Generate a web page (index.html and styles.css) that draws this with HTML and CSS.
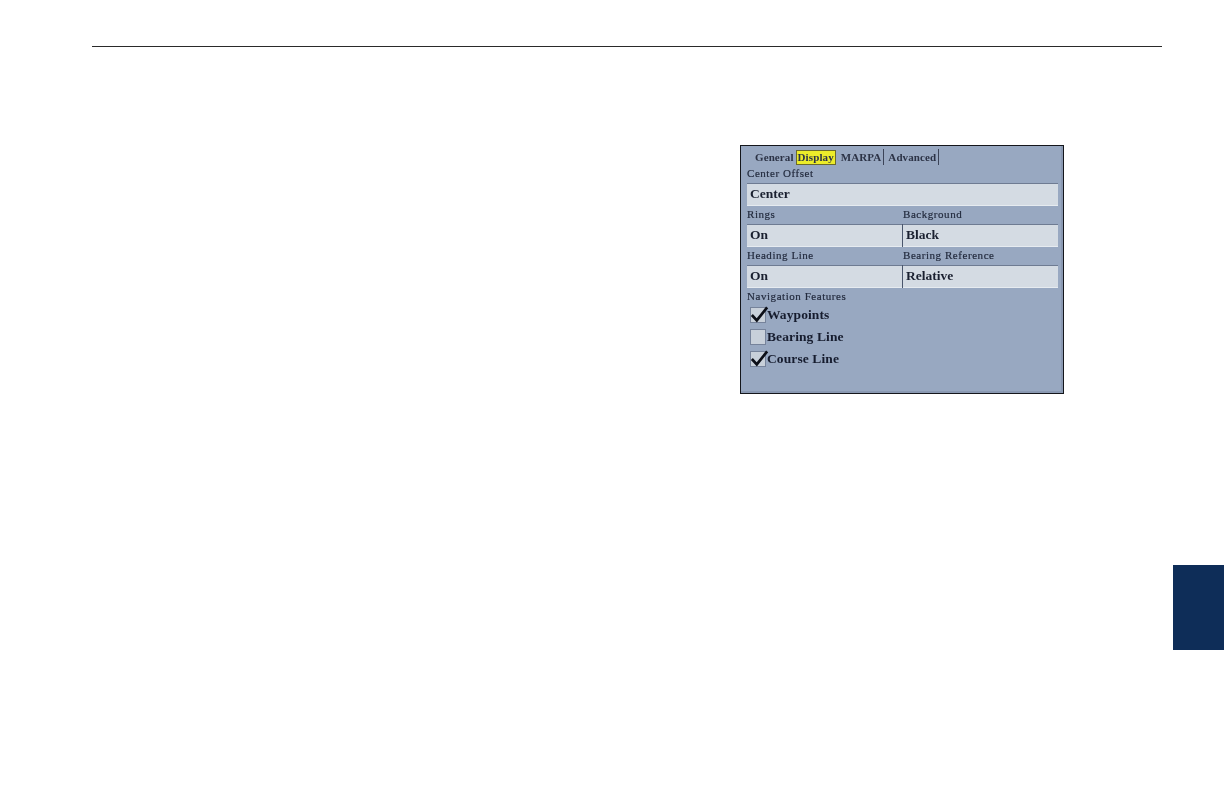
FILE: index.html
```html
<!DOCTYPE html>
<html lang="en">
<head>
<meta charset="utf-8">
<title>Display settings</title>
<link rel="stylesheet" href="styles.css">
</head>
<body>
<div class="rule"></div>
<main class="screen">
  <nav class="tabs">
    <span class="tab">General</span>
    <span class="tab active">Display</span>
    <span class="tab sep">MARPA</span>
    <span class="tab sep">Advanced</span>
  </nav>
  <div class="label">Center Offset</div>
  <div class="field">Center</div>
  <div class="pairs">
    <div class="pair"><div class="label">Rings</div><div class="field">On</div></div>
    <div class="pair"><div class="label">Background</div><div class="field">Black</div></div>
    <div class="pair"><div class="label">Heading Line</div><div class="field">On</div></div>
    <div class="pair"><div class="label">Bearing Reference</div><div class="field">Relative</div></div>
  </div>
  <div class="label nav-label">Navigation Features</div>
  <ul class="checks">
    <li class="check"><span class="box"><svg class="tick" viewBox="0 0 20 20"><path d="M1.500 10 L7 16 L18.500 1.500"/></svg></span>Waypoints</li>
    <li class="check"><span class="box"></span>Bearing Line</li>
    <li class="check"><span class="box"><svg class="tick" viewBox="0 0 20 20"><path d="M1.500 10 L7 16 L18.500 1.500"/></svg></span>Course Line</li>
  </ul>
</main>
<div class="side-tab"></div>
</body>
</html>
```
FILE: styles.css
```css
html, body {
  margin: 0;
  padding: 0;
  background: #fff;
}
body {
  position: relative;
  width: 1224px;
  height: 796px;
  overflow: hidden;
  font-family: "Liberation Serif", serif;
}
.rule {
  height: 1px;
  margin: 46px 62px 0 92px;
  background: #2a2a2a;
}
.screen {
  box-sizing: border-box;
  width: 324px;
  height: 249px;
  margin: 98px 0 0 740px;
  padding: 2px 5px 0 6px;
  border: 1px solid #14161b;
  background: #98a8c1;
  box-shadow: inset -2px -2px 0 #8a99b2;
  color: #1c2438;
}
.tabs,
.label,
.field,
.check {
  filter: blur(0.35px);
}
.tabs {
  display: flex;
  align-items: center;
  height: 18px;
  padding-left: 5px;
  gap: 1px;
}
.tab {
  padding: 0 2px 0 3px;
  font-size: 11px;
  font-weight: bold;
  line-height: 16px;
  color: #2c3346;
  letter-spacing: 0.1px;
}
.tab.active {
  padding: 0 1px;
  margin: 1px 1px 0 -1px;
  background: #ecec2a;
  border: 1px solid #6b6a2c;
  line-height: 13px;
}
.tab.sep {
  border-right: 1px solid #3c4458;
}
.label {
  height: 15px;
  font-size: 11px;
  line-height: 13px;
  color: #232b3e;
  letter-spacing: 0.55px;
  padding-top: 1px;
  box-sizing: border-box;
  -webkit-text-stroke: 0.2px #232b3e;
}
.field {
  box-sizing: border-box;
  height: 23px;
  margin-top: 2px;
  padding-left: 3px;
  background: #d4dbe3;
  border-top: 1px solid #6e7b92;
  border-bottom: 1px solid #e6ebf0;
  font-size: 13.500px;
  line-height: 20px;
  font-weight: bold;
  color: #1a2030;
}
.pairs {
  display: grid;
  grid-template-columns: 155px 155px;
  gap: 1px;
  margin-top: 1px;
}
.pair:nth-child(even) .field {
  box-shadow: -1px 0 0 #4a566c;
}
.nav-label {
  margin-top: 1px;
}
.checks {
  list-style: none;
  margin: 2px 0 0 3px;
  padding: 0;
  display: flex;
  flex-direction: column;
  gap: 5px;
}
.check {
  display: flex;
  align-items: center;
  height: 17px;
  font-size: 13.500px;
  font-weight: bold;
  letter-spacing: 0.1px;
  color: #161c2e;
}
.box {
  position: relative;
  flex: none;
  box-sizing: border-box;
  width: 16px;
  height: 16px;
  margin-right: 1px;
  background: #c8d0da;
  border: 1px solid #76839b;
}
.tick {
  position: absolute;
  left: -1px;
  top: -2px;
  width: 19px;
  height: 18px;
  fill: none;
  stroke: #0c0f18;
  stroke-width: 3;
}
.side-tab {
  position: absolute;
  left: 1173px;
  top: 565px;
  width: 51px;
  height: 85px;
  background: #0e2d58;
}
```
